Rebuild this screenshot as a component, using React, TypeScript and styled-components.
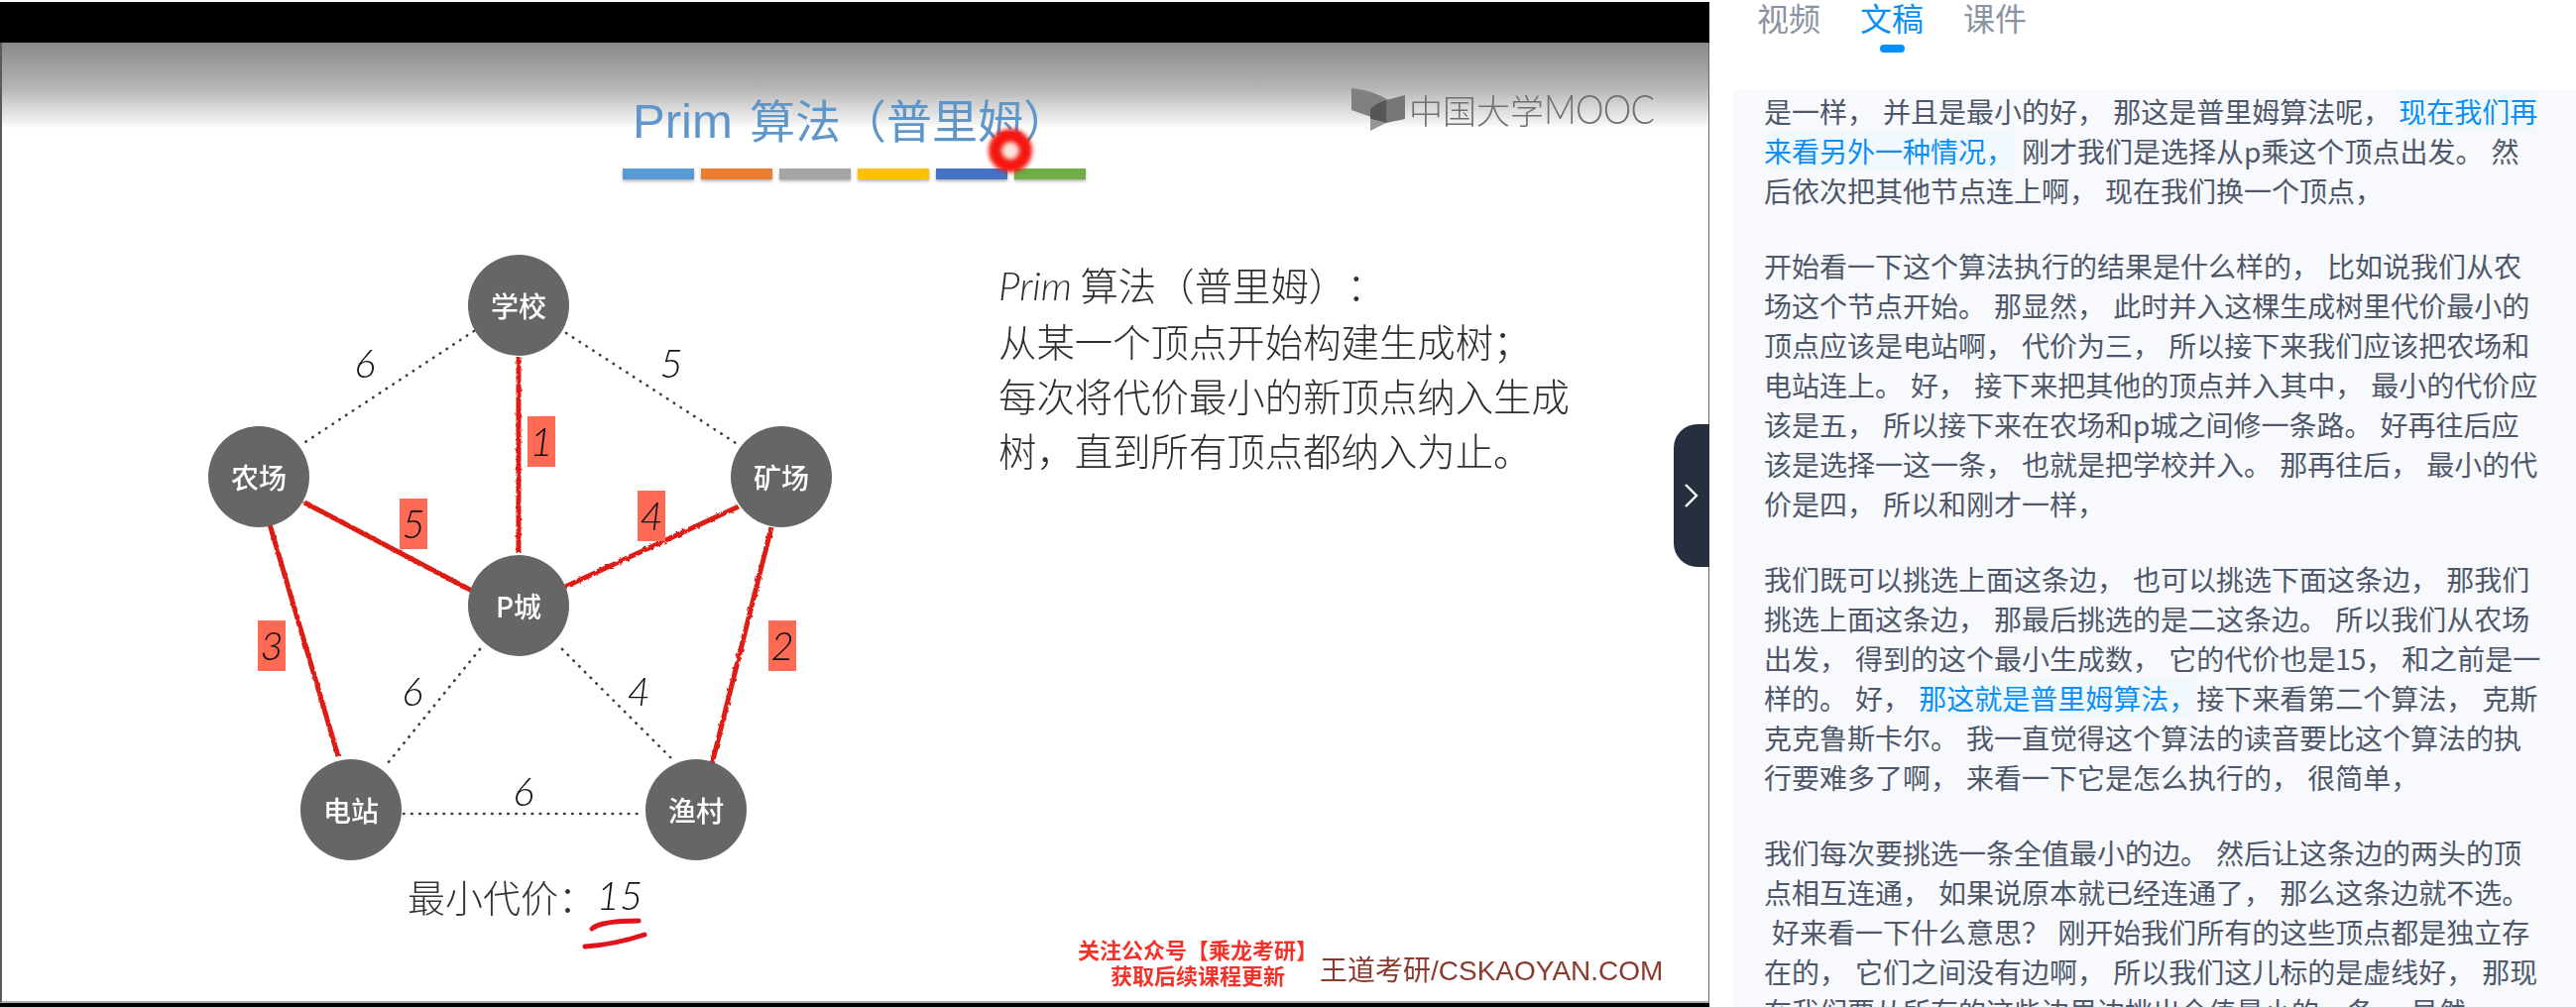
import styled, { createGlobalStyle } from 'styled-components';

const CJK = `'Noto Sans CJK SC', sans-serif`;
const LATIN_THIN = `'Lato', 'Liberation Sans', sans-serif`;

const GlobalStyle = createGlobalStyle`
  html, body {
    margin: 0;
    padding: 0;
    background: #fff;
  }
  body {
    font-family: ${CJK};
    text-spacing-trim: space-all;
  }
`;

const Page = styled.div`
  display: flex;
  width: 2598px;
  height: 1016px;
  overflow: hidden;
  background: #fff;
`;

const VideoPane = styled.section`
  position: relative;
  display: flex;
  flex-direction: column;
  flex: none;
  width: 1724px;
  padding-top: 2px;
  box-sizing: border-box;
`;

const BlackBar = styled.div<{ $height: number }>`
  flex: none;
  height: ${(p) => p.$height}px;
  background: #000;
`;

const Slide = styled.div`
  flex: 1;
  display: flex;
  flex-direction: column;
  min-height: 0;
  box-sizing: border-box;
  border-left: 2px solid #5a5a5a;
  border-right: 1px solid #666;
  border-bottom: 2px solid #aaa;
  background: linear-gradient(#8a8a8a 0, #b4b4b4 45px, #f4f4f4 82px, #fff 86px);
  filter: blur(0.5px);
`;

const SlideHead = styled.header`
  flex: none;
  display: flex;
  align-items: flex-start;
  height: 207px;
  padding-left: 626px;
`;

const TitleBlock = styled.div`
  width: 472px;
  padding-top: 48px;
`;

const Title = styled.h1`
  margin: 0;
  height: 56px;
  padding-left: 10px;
  font: 400 46px/56px ${CJK};
  word-spacing: 7px;
  color: #5f96c9;
  white-space: nowrap;
  span {
    font-family: 'Liberation Sans', sans-serif;
    font-size: 49px;
  }
`;

const ColorBars = styled.div`
  display: flex;
  gap: 7px;
  margin-top: 23px;
`;

const ColorBar = styled.i<{ $color: string }>`
  display: block;
  width: 72px;
  height: 11px;
  background: ${(p) => p.$color};
  box-shadow: 0 2px 3px rgba(0, 0, 0, 0.3);
`;

const Logo = styled.div`
  display: flex;
  align-items: center;
  gap: 3px;
  margin: 44px 0 0 262px;
  color: #707070;
  svg {
    flex: none;
  }
`;

const LogoText = styled.span`
  font: 300 34px/44px ${CJK};
  white-space: nowrap;
  em {
    display: inline-block;
    font: 300 42px/44px 'Lato', 'Liberation Sans', sans-serif;
    letter-spacing: -1px;
    transform: scaleX(0.86);
    transform-origin: left center;
  }
`;

const SlideBody = styled.div`
  flex: 1;
  min-height: 0;
  display: grid;
  grid-template-columns: 1005px 1fr;
`;

const GraphSvg = styled.svg`
  display: block;
`;

const NodeLabel = styled.text`
  font: 500 28px ${CJK};
  fill: #fff;
  text-anchor: middle;
  dominant-baseline: central;
`;

const Weight = styled.text`
  font: italic 300 40px ${LATIN_THIN};
  fill: #111;
  text-anchor: middle;
  dominant-baseline: central;
`;

const CostLabel = styled.text`
  font: 300 38px ${CJK};
  fill: #333;
  dominant-baseline: central;
`;

const SideColumn = styled.div`
  display: flex;
  flex-direction: column;
  justify-content: space-between;
  padding: 9px 0 14px;
  min-height: 0;
`;

const Description = styled.p`
  margin: 0;
  width: 590px;
  font: 300 38.4px/55px ${CJK};
  color: #2e2e2e;
  em {
    font: italic 300 40px/55px ${LATIN_THIN};
  }
`;

const Footer = styled.div`
  display: flex;
  align-items: flex-end;
  gap: 2px;
  padding-left: 80px;
`;

const Notice = styled.div`
  font: 700 22px/26px ${CJK};
  color: #f5322a;
  text-align: center;
  white-space: nowrap;
`;

const SiteMark = styled.div`
  font: 400 28px/32px 'Liberation Sans', ${CJK};
  color: #8a3b2d;
  white-space: nowrap;
`;

const CollapseTab = styled.button`
  position: absolute;
  top: 428px;
  right: 0;
  display: flex;
  align-items: center;
  justify-content: center;
  width: 36px;
  height: 144px;
  padding: 0;
  border: 0;
  border-radius: 24px 0 0 24px;
  background: #272f3f;
`;

const Pointer = styled.div`
  position: absolute;
  left: 997px;
  top: 130px;
  width: 18px;
  height: 18px;
  border: 13px solid #f5170f;
  border-radius: 50%;
  background: #fde2da;
  filter: blur(2px);
`;

const Sidebar = styled.aside`
  flex: 1;
  min-width: 0;
  display: flex;
  flex-direction: column;
`;

const Tabs = styled.nav`
  flex: none;
  display: flex;
  gap: 40px;
  height: 90px;
  padding-left: 48px;
`;

const Tab = styled.div<{ $active?: boolean }>`
  position: relative;
  height: 34px;
  font: 400 32px/34px ${CJK};
  color: ${(p) => (p.$active ? '#0a8ff5' : '#8a93a3')};
  &::after {
    content: ${(p) => (p.$active ? "''" : 'none')};
    position: absolute;
    left: 20px;
    top: 45px;
    width: 25px;
    height: 8px;
    border-radius: 4px;
    background: #0090ff;
  }
`;

const Transcript = styled.div`
  flex: 1;
  margin-left: 24px;
  padding: 2px 34px 0 31px;
  background: #f7f9fd;
  overflow: hidden;
`;

const Paragraph = styled.p`
  margin: 0 0 36px;
  font: 400 28px/40px ${CJK};
  word-spacing: 1.8px;
  color: #4e586a;
`;

const Highlight = styled.span`
  color: #0a8ff5;
  background: #f2f9fe;
`;

const barColors = ['#5b9bd5', '#ed7d31', '#a5a5a5', '#ffc000', '#4472c4', '#70ad47'];

const nodes = [
  { name: '学校', x: 523, y: 308 },
  { name: '农场', x: 261, y: 481 },
  { name: '矿场', x: 788, y: 481 },
  { name: 'P城', x: 523, y: 611 },
  { name: '电站', x: 354, y: 817 },
  { name: '渔村', x: 702, y: 817 },
];

const dottedEdges = [
  [478, 334, 308, 446],
  [571, 336, 742, 447],
  [484, 655, 391, 770],
  [567, 655, 678, 766],
  [407, 821, 644, 821],
];

const chosenEdges = [
  [523, 360, 523, 558],
  [307, 507, 476, 596],
  [745, 511, 570, 592],
  [272, 529, 341, 763],
  [778, 532, 718, 771],
];

const plainWeights = [
  { value: '6', x: 368, y: 366 },
  { value: '5', x: 677, y: 366 },
  { value: '6', x: 416, y: 697 },
  { value: '4', x: 644, y: 697 },
  { value: '6', x: 528, y: 798 },
];

const boxedWeights = [
  { value: '1', x: 532, y: 420 },
  { value: '5', x: 403, y: 503 },
  { value: '4', x: 643, y: 495 },
  { value: '3', x: 260, y: 626 },
  { value: '2', x: 775, y: 626 },
];

function Graph() {
  return (
    <GraphSvg width="1000" height="720" viewBox="2 250 1000 720">
      <defs>
        <filter id="rough" x="2" y="250" width="1000" height="720" filterUnits="userSpaceOnUse">
          <feTurbulence type="fractalNoise" baseFrequency="0.25" numOctaves="2" seed="3" result="noise" />
          <feDisplacementMap in="SourceGraphic" in2="noise" scale="3" />
        </filter>
      </defs>
      {dottedEdges.map(([x1, y1, x2, y2], i) => (
        <line
          key={i}
          x1={x1}
          y1={y1}
          x2={x2}
          y2={y2}
          stroke="#3c3c3c"
          strokeWidth="2.6"
          strokeLinecap="round"
          strokeDasharray="0.5 7.6"
        />
      ))}
      <g filter="url(#rough)">
        {chosenEdges.map(([x1, y1, x2, y2], i) => (
          <line key={i} x1={x1} y1={y1} x2={x2} y2={y2} stroke="#dd1f14" strokeWidth="5" />
        ))}
      </g>
      {boxedWeights.map((w) => (
        <g key={w.value}>
          <rect x={w.x} y={w.y} width="28" height="51" fill="#ff6a55" />
          <Weight x={w.x + 14} y={w.y + 25}>
            {w.value}
          </Weight>
        </g>
      ))}
      {plainWeights.map((w, i) => (
        <Weight key={i} x={w.x} y={w.y}>
          {w.value}
        </Weight>
      ))}
      {nodes.map((n) => (
        <g key={n.name}>
          <circle cx={n.x} cy={n.y} r="51" fill="#666" />
          <NodeLabel x={n.x} y={n.y}>
            {n.name}
          </NodeLabel>
        </g>
      ))}
      <CostLabel x="411" y="903">
        最小代价：
      </CostLabel>
      <Weight x="625" y="903">
        15
      </Weight>
      <path d="M597 937 Q606 929 644 929" fill="none" stroke="#e0141c" strokeWidth="5" strokeLinecap="round" />
      <path d="M590 955 Q620 953 650 943" fill="none" stroke="#e0141c" strokeWidth="5" strokeLinecap="round" />
    </GraphSvg>
  );
}

function App() {
  return (
    <>
      <GlobalStyle />
      <Page>
        <VideoPane>
          <BlackBar $height={41} />
          <Slide>
            <SlideHead>
              <TitleBlock>
                <Title>
                  <span>Prim</span> 算法（普里姆）
                </Title>
                <ColorBars>
                  {barColors.map((c) => (
                    <ColorBar key={c} $color={c} />
                  ))}
                </ColorBars>
              </TitleBlock>
              <Logo>
                <svg width="56" height="46" viewBox="12 10 56 46">
                  <path d="M13 12 Q35 14 50 24 L50 47 L13 34 Z" fill="#808080" />
                  <path d="M48 24 L67 19 L67 43 L48 47 Z" fill="#767676" />
                  <path d="M32 43 L48 47 L32 55 Z" fill="#969696" />
                  <path d="M32 33 Q38 27 48 24 L48 47 L32 43 Z" fill="#565656" />
                </svg>
                <LogoText>
                  中国大学<em>MOOC</em>
                </LogoText>
              </Logo>
            </SlideHead>
            <SlideBody>
              <Graph />
              <SideColumn>
                <Description>
                  <em>Prim</em> 算法（普里姆）：
                  <br />
                  从某一个顶点开始构建生成树；
                  <br />
                  每次将代价最小的新顶点纳入生成树，直到所有顶点都纳入为止。
                </Description>
                <Footer>
                  <Notice>
                    关注公众号【乘龙考研】
                    <br />
                    获取后续课程更新
                  </Notice>
                  <SiteMark>王道考研/CSKAOYAN.COM</SiteMark>
                </Footer>
              </SideColumn>
            </SlideBody>
          </Slide>
          <BlackBar $height={4} />
          <Pointer />
          <CollapseTab>
            <svg width="16" height="26" viewBox="0 0 16 26">
              <path d="M2 2 L13 13 L2 24" fill="none" stroke="#fff" strokeWidth="2.4" />
            </svg>
          </CollapseTab>
        </VideoPane>
        <Sidebar>
          <Tabs>
            <Tab>视频</Tab>
            <Tab $active>文稿</Tab>
            <Tab>课件</Tab>
          </Tabs>
          <Transcript>
            <Paragraph>
              是一样， 并且是最小的好， 那这是普里姆算法呢， <Highlight>现在我们再来看另外一种情况，</Highlight> 刚才我们是选择从p乘这个顶点出发。 然后依次把其他节点连上啊， 现在我们换一个顶点，
            </Paragraph>
            <Paragraph>
              开始看一下这个算法执行的结果是什么样的， 比如说我们从农场这个节点开始。 那显然， 此时并入这棵生成树里代价最小的顶点应该是电站啊， 代价为三， 所以接下来我们应该把农场和电站连上。 好， 接下来把其他的顶点并入其中， 最小的代价应该是五， 所以接下来在农场和p城之间修一条路。 好再往后应该是选择一这一条， 也就是把学校并入。 那再往后， 最小的代价是四， 所以和刚才一样，
            </Paragraph>
            <Paragraph>
              我们既可以挑选上面这条边， 也可以挑选下面这条边， 那我们挑选上面这条边， 那最后挑选的是二这条边。 所以我们从农场出发， 得到的这个最小生成数， 它的代价也是15， 和之前是一样的。 好， <Highlight>那这就是普里姆算法，</Highlight>接下来看第二个算法， 克斯克克鲁斯卡尔。 我一直觉得这个算法的读音要比这个算法的执行要难多了啊， 来看一下它是怎么执行的， 很简单，
            </Paragraph>
            <Paragraph>
              我们每次要挑选一条全值最小的边。 然后让这条边的两头的顶点相互连通， 如果说原本就已经连通了， 那么这条边就不选。
              <br />
              &nbsp;好来看一下什么意思？ 刚开始我们所有的这些顶点都是独立存在的， 它们之间没有边啊， 所以我们这儿标的是虚线好， 那现在我们要从所有的这些边里边挑出全值最小的一条。 显然， 一个
            </Paragraph>
          </Transcript>
        </Sidebar>
      </Page>
    </>
  );
}

export default App;
